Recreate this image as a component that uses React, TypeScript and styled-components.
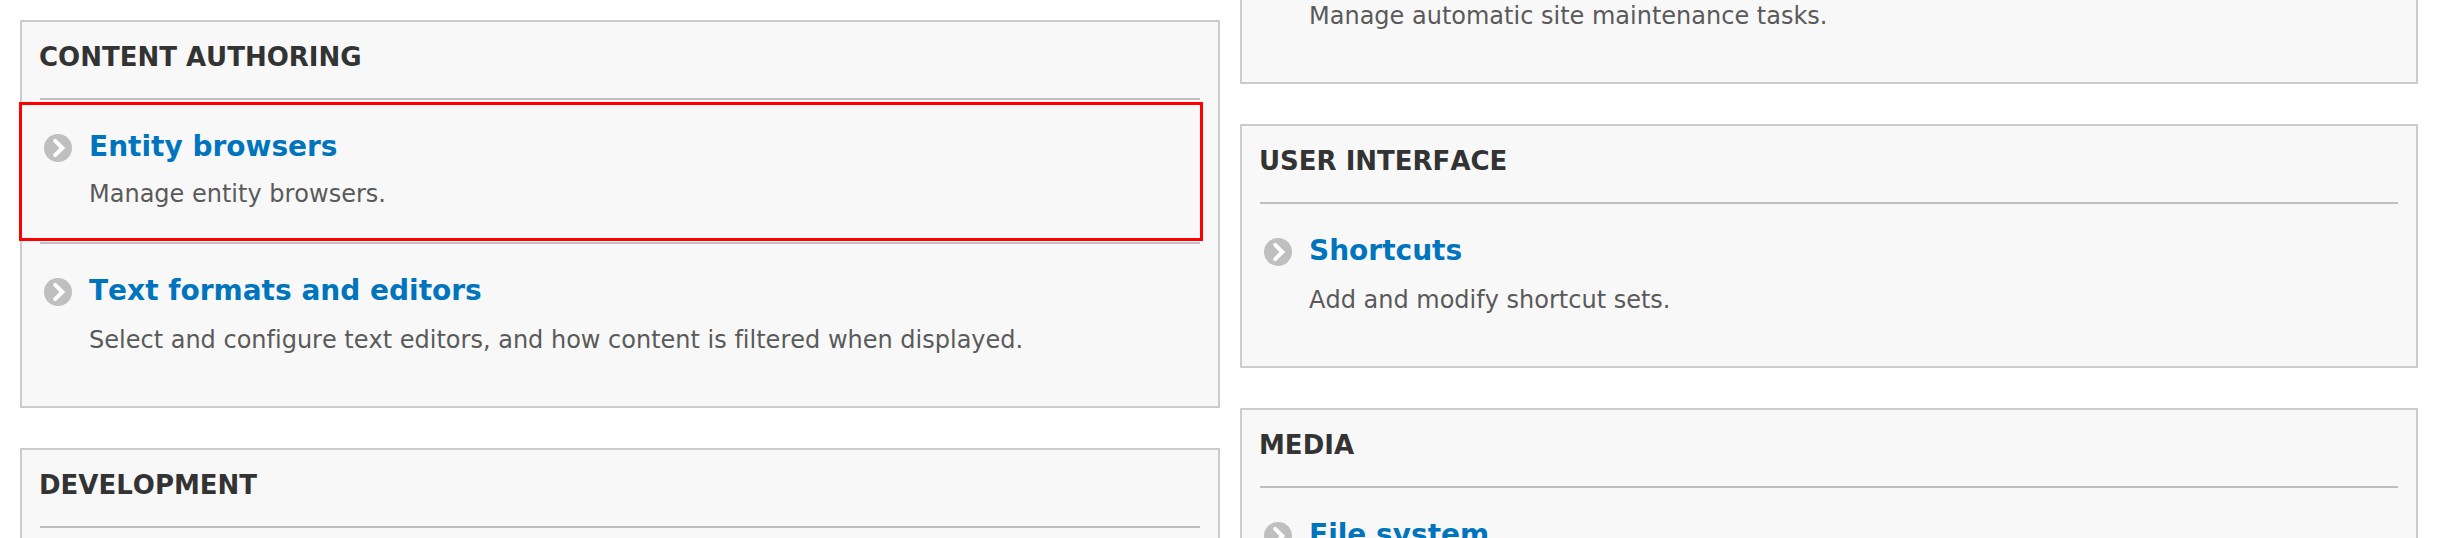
import React from "react";
import styled, { createGlobalStyle } from "styled-components";

const GlobalStyle = createGlobalStyle`
  * { box-sizing: border-box; }
  html, body { margin: 0; padding: 0; background: #fff; }
  body {
    font-family: "DejaVu Sans", sans-serif;
    font-size: 26px;
    color: #333;
    font-kerning: none;
    font-variant-ligatures: none;
  }
`;

const Page = styled.main`
  display: grid;
  grid-template-columns: 1200px 1178px;
  column-gap: 20px;
  width: 2441px;
  height: 538px;
  padding-left: 20px;
  overflow: hidden;
`;

const Column = styled.div<{ $top: number }>`
  display: flex;
  flex-direction: column;
  gap: 40px;
  padding-top: ${(p) => p.$top}px;
  height: 538px;
`;

const Panel = styled.section<{ $height: number; $continued?: boolean }>`
  flex: none;
  height: ${(p) => p.$height}px;
  padding: 0 18px;
  background: #f8f8f8;
  border: 2px solid #ccc;
  border-top-width: ${(p) => (p.$continued ? 0 : 2)}px;
`;

const PanelTitle = styled.h3`
  margin: 0 0 0 -1px;
  height: 76px;
  padding-top: 20px;
  font-size: 26px;
  line-height: 30px;
  font-weight: bold;
  text-transform: uppercase;
  white-space: nowrap;
`;

const List = styled.ul`
  margin: 0;
  padding: 0;
  list-style: none;
`;

const Item = styled.li`
  position: relative;
  display: flex;
  height: 144px;
  padding-left: 4px;
  border-top: 2px solid #bfbfbf;
`;

const Marker = styled.svg`
  flex: none;
  width: 28px;
  height: 28px;
  margin: 34px 17px 0 0;
`;

const ItemBody = styled.div`
  padding-top: 29px;
  white-space: nowrap;
`;

const ItemLink = styled.a`
  display: block;
  height: 38px;
  font-size: 28px;
  line-height: 36px;
  font-weight: bold;
  color: #0074bd;
  text-decoration: none;
`;

const Description = styled.p<{ $tight?: boolean }>`
  margin: ${(p) => (p.$tight ? 12 : 14)}px 0 0;
  font-size: 24px;
  line-height: 30px;
  color: #5a5a5a;
`;

const ContinuedDescription = styled(Description)`
  margin: 1px 0 0 49px;
`;

const Highlight = styled.div`
  position: absolute;
  top: 2px;
  left: -21px;
  width: 1184px;
  height: 139px;
  border: 3px solid #f00;
  pointer-events: none;
`;

interface EntryProps {
  title: string;
  text?: string;
  highlighted?: boolean;
}

const Entry = ({ title, text, highlighted }: EntryProps) => (
  <Item>
    <Marker viewBox="0 0 28 28" aria-hidden="true">
      <circle cx="14" cy="14" r="14" fill="#bfbfbf" />
      <path
        d="M11.2 6.8 L18.4 14 L11.2 21.2"
        fill="none"
        stroke="#fff"
        strokeWidth="4"
        strokeLinecap="round"
      />
    </Marker>
    <ItemBody>
      <ItemLink href="#">{title}</ItemLink>
      {text && <Description $tight={highlighted}>{text}</Description>}
    </ItemBody>
    {highlighted && <Highlight />}
  </Item>
);

export default function App() {
  return (
    <>
      <GlobalStyle />
      <Page>
        <Column $top={20}>
          <Panel $height={388}>
            <PanelTitle>Content authoring</PanelTitle>
            <List>
              <Entry title="Entity browsers" text="Manage entity browsers." highlighted />
              <Entry
                title="Text formats and editors"
                text="Select and configure text editors, and how content is filtered when displayed."
              />
            </List>
          </Panel>
          <Panel $height={244}>
            <PanelTitle>Development</PanelTitle>
            <List>
              <Item />
            </List>
          </Panel>
        </Column>
        <Column $top={0}>
          <Panel $height={84} $continued>
            <ContinuedDescription>Manage automatic site maintenance tasks.</ContinuedDescription>
          </Panel>
          <Panel $height={244}>
            <PanelTitle>User interface</PanelTitle>
            <List>
              <Entry title="Shortcuts" text="Add and modify shortcut sets." />
            </List>
          </Panel>
          <Panel $height={244}>
            <PanelTitle>Media</PanelTitle>
            <List>
              <Entry title="File system" />
            </List>
          </Panel>
        </Column>
      </Page>
    </>
  );
}
